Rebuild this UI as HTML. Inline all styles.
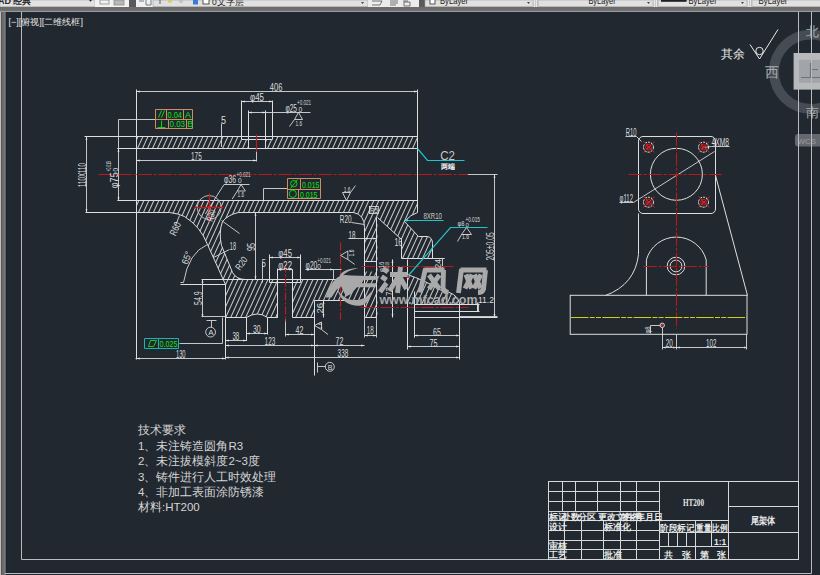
<!DOCTYPE html>
<html><head><meta charset="utf-8">
<style>
html,body{margin:0;padding:0;background:#212830;width:820px;height:575px;overflow:hidden}
svg{position:absolute;left:0;top:0;display:block}
text{font-family:"Liberation Sans",sans-serif}
</style></head><body>
<svg width="820" height="575" viewBox="0 0 820 575">
<defs>
<pattern id="hat" width="5" height="11" patternUnits="userSpaceOnUse">
<path d="M0,11 L5,0 M-5,11 L0,0 M5,11 L10,0" stroke="#c8c8c8" stroke-width="1.05"/>
</pattern>
<linearGradient id="tb" x1="0" y1="0" x2="0" y2="1">
<stop offset="0" stop-color="#e6e6e6"/><stop offset="1" stop-color="#d2d2d2"/>
</linearGradient>
</defs>
<!-- background -->
<rect x="0" y="0" width="820" height="575" fill="#212830"/>

<!-- TOOLBAR -->
<g id="toolbar">
<rect x="0" y="0" width="820" height="7" fill="url(#tb)"/>
<rect x="0" y="7" width="820" height="3.5" fill="#6c6c6c"/>
<rect x="0" y="10.5" width="820" height="1.5" fill="#9a9a9a"/>
<!-- dropdown 1 -->
<rect x="0" y="0" width="95" height="6.5" fill="#e2e2e2" stroke="#a8a8a8" stroke-width="0.6"/>
<text x="-2" y="4" font-size="9" fill="#2a2a2a" font-weight="bold">AD 经典</text>
<path d="M89,0 L92,0 L90.5,1.8 Z" fill="#303030"/>
<rect x="95" y="0" width="34" height="7" fill="#f2f2f2"/>
<rect x="100" y="0" width="9" height="4" fill="none" stroke="#8a8a8a" stroke-width="0.8"/>
<rect x="114" y="0" width="10" height="5" fill="#b8b8b8" stroke="#8a8a8a" stroke-width="0.8"/>
<rect x="129" y="0" width="7" height="7" fill="#5a5a5a"/>
<rect x="136" y="0" width="17" height="7" fill="#f0f0f0"/>
<path d="M139,1 H144 M146,0 V5 H151 V0" stroke="#506070" stroke-width="0.8" fill="none"/>
<!-- layer dropdown -->
<rect x="153" y="0" width="215" height="6.5" fill="#e0e0e0" stroke="#a0a0a0" stroke-width="0.6"/>
<path d="M160,0 V4" stroke="#606060" stroke-width="1"/>
<circle cx="170" cy="1" r="2" fill="#d8c870"/>
<circle cx="181" cy="1" r="2" fill="#c0c0c0"/>
<rect x="193" y="0" width="5" height="4.5" fill="#3c7ad8"/>
<rect x="203" y="-1" width="6" height="5" fill="#fff" stroke="#303030" stroke-width="0.8"/>
<text x="212" y="4.5" font-size="8.5" fill="#202020">0文字层</text>
<path d="M361,2 L364,2 L362.5,4 Z" fill="#404040"/>
<rect x="368" y="0" width="51" height="7" fill="#ececec"/>
<path d="M372,1 H382 L380,5 H372 M390,1 H398 M390,3 H398 M390,5 H396 M403,1 H408 M404,2 H410 V6 H404 Z" stroke="#404040" stroke-width="0.7" fill="none"/>
<rect x="419" y="0" width="6" height="7" fill="#5a5a5a"/>
<rect x="425" y="0" width="108" height="6.5" fill="#e0e0e0" stroke="#a0a0a0" stroke-width="0.6"/>
<rect x="430" y="-1" width="5" height="5" fill="#fff" stroke="#303030" stroke-width="0.8"/>
<text x="440" y="4" font-size="9" fill="#202020" textLength="28" lengthAdjust="spacingAndGlyphs">ByLayer</text>
<path d="M527,2 L530,2 L528.5,4 Z" fill="#404040"/>
<rect x="533" y="0" width="5" height="7" fill="#c8c8c8"/>
<path d="M534.5,0 V7 M536.5,0 V7" stroke="#f8f8f8" stroke-width="0.7"/>
<rect x="538" y="0" width="115" height="6.5" fill="#e0e0e0" stroke="#a0a0a0" stroke-width="0.6"/>
<text x="588.4" y="4" font-size="9" fill="#202020" textLength="27.3" lengthAdjust="spacingAndGlyphs">ByLayer</text>
<path d="M647,2 L650,2 L648.5,4 Z" fill="#404040"/>
<rect x="653" y="0" width="5" height="7" fill="#c8c8c8"/>
<path d="M654.5,0 V7 M656.5,0 V7" stroke="#f8f8f8" stroke-width="0.7"/>
<rect x="658" y="0" width="89" height="6.5" fill="#e0e0e0" stroke="#a0a0a0" stroke-width="0.6"/>
<rect x="661" y="0" width="25.6" height="1.8" fill="#202020"/>
<text x="688.5" y="4" font-size="9" fill="#202020" textLength="28.2" lengthAdjust="spacingAndGlyphs">ByLayer</text>
<path d="M741,2 L744,2 L742.5,4 Z" fill="#404040"/>
<rect x="747" y="0" width="5" height="7" fill="#c8c8c8"/>
<path d="M748.5,0 V7 M750.5,0 V7" stroke="#f8f8f8" stroke-width="0.7"/>
<rect x="752" y="0" width="70" height="6.5" fill="#e0e0e0" stroke="#a0a0a0" stroke-width="0.6"/>
<text x="758.5" y="4" font-size="9" fill="#202020" textLength="29" lengthAdjust="spacingAndGlyphs">ByLayer</text>
</g>
<!-- left panel -->
<rect x="0" y="12" width="5.7" height="563" fill="#6e6e6e"/>
<rect x="0" y="12" width="1.1" height="563" fill="#c0c0c0"/>
<rect x="1.1" y="12" width="1" height="563" fill="#555555"/>
<rect x="4.7" y="12" width="1" height="563" fill="#8e8e8e"/>
<rect x="5.7" y="12" width="0.8" height="563" fill="#1c222a"/>

<!-- FRAME -->
<g stroke="#b8bcc0" stroke-width="1" fill="none">
<path d="M21.5,12 V559.5 H798.5 V12"/>
<path d="M5,573.5 H811.5 V12"/>
</g>

<!-- viewport label -->
<text x="8.5" y="25" font-size="9" fill="#e4e4e4" textLength="74.5" lengthAdjust="spacingAndGlyphs">[−][俯视][二维线框]</text>

<!-- VIEWCUBE -->
<g id="viewcube">
<circle cx="811" cy="71.7" r="37.1" fill="none" stroke="#464c54" stroke-width="9.8"/>
<rect x="793.6" y="53" width="30" height="36.6" fill="#b8b9ba"/>
<rect x="799" y="59.8" width="25" height="23" fill="#a1a5a9"/>
<path d="M801,77.5 H820 M810.5,63 V77.5 M810.5,69.5 H818" stroke="#6e7378" stroke-width="1.2" fill="none"/>
<text x="805.5" y="35.5" font-size="13" fill="#a6aaae" style="font-family:'Liberation Serif',serif">北</text>
<text x="764.5" y="76.5" font-size="13.5" fill="#a6aaae" style="font-family:'Liberation Serif',serif">西</text>
<text x="805.5" y="117" font-size="13" fill="#a6aaae" style="font-family:'Liberation Serif',serif">南</text>
<rect x="795" y="134" width="30" height="12.5" rx="3" fill="#646970"/>
<text x="797.5" y="143.5" font-size="8" fill="#9a9ea3">WCS</text>
</g>
<!-- frame lines over viewcube -->
<g stroke="#b8bcc0" stroke-width="1" fill="none">
<path d="M798.5,12 V160 M811.5,12 V160"/>
</g>

<!-- 其余 roughness -->
<text x="720.5" y="57.5" font-size="11.5" fill="#e8e8e8" style="font-family:'Liberation Serif',serif">其余</text>
<g stroke="#e8e8e8" stroke-width="1" fill="none">
<path d="M750,44.5 L759.5,59 L778,29.5"/>
<circle cx="759.5" cy="51" r="3.7"/>
</g>

<!-- TECH TEXT -->
<g font-size="11.5" fill="#d4d4d4">
<text x="138" y="433.5">技术要求</text>
<text x="138" y="449.5">1、未注铸造圆角R3</text>
<text x="138" y="465">2、未注拔模斜度2~3度</text>
<text x="138" y="480.5">3、铸件进行人工时效处理</text>
<text x="138" y="496">4、非加工表面涂防锈漆</text>
<text x="138" y="511">材料:HT200</text>
</g>

<!-- TITLE BLOCK -->
<g stroke="#d8d8d8" stroke-width="1" fill="none">
<rect x="548.5" y="481.5" width="250" height="78"/>
<path d="M548.5,491.5 H659.5 M548.5,501.5 H659.5 M548.5,511.5 H659.5 M548.5,520.5 H659.5 M548.5,530.5 H659.5 M548.5,540.5 H659.5 M548.5,549.5 H659.5"/>
<path d="M562.5,481.5 V511.5 M575.5,481.5 V511.5 M597.5,481.5 V511.5 M620.5,481.5 V511.5 M636.5,481.5 V511.5"/>
<path d="M564.5,520.5 V559.5 M581.5,520.5 V559.5 M603.5,520.5 V559.5 M620.5,520.5 V559.5 M636.5,520.5 V559.5"/>
<path d="M659.5,481.5 V559.5 M728.5,481.5 V559.5"/>
<path d="M659.5,520.5 H728.5 M659.5,532.5 H728.5 M659.5,546.5 H728.5"/>
<path d="M668.5,532.5 V546.5 M677.5,532.5 V546.5 M686.5,532.5 V546.5 M695.5,520.5 V559.5 M711.5,520.5 V546.5"/>
<path d="M728.5,506.5 H798.5 M728.5,532.5 H798.5"/>
</g>
<g font-size="8.5" fill="#e8e8e8" font-weight="bold">
<text x="549" y="519.5">标记</text><text x="562" y="519.5">处数</text>
<text x="578" y="519.5">分区</text>
<text x="598" y="519.5">更改文件号</text>
<text x="621" y="519.5">签名</text>
<text x="636" y="519.5">年月日</text>
<text x="549" y="529.5">设计</text>
<text x="604" y="529.5">标准化</text>
<text x="549" y="548.5">审核</text>
<text x="549" y="558">工艺</text>
<text x="604" y="558">批准</text>
<text x="660" y="531" textLength="34.5" lengthAdjust="spacingAndGlyphs">阶段标记</text>
<text x="696" y="531" textLength="15" lengthAdjust="spacingAndGlyphs">重量</text>
<text x="712" y="531" textLength="15.5" lengthAdjust="spacingAndGlyphs">比例</text>
<text x="714" y="545">1:1</text>
<text x="664" y="557.5">共</text><text x="682" y="557.5">张</text>
<text x="700" y="557.5">第</text><text x="717" y="557.5">张</text>
<text x="683" y="506" font-size="11" textLength="21" lengthAdjust="spacingAndGlyphs" style="font-family:'Liberation Serif',serif">HT200</text>
<text x="750.5" y="524" font-size="10" textLength="24.5" lengthAdjust="spacingAndGlyphs">尾架体</text>
</g>

<!-- ===== MAIN VIEW: hatch ===== -->
<g fill="url(#hat)" stroke="none">
<!-- tube top wall -->
<path d="M136.5,136.5 H241.5 V139.5 H248.5 V148.5 H136.5 Z"/>
<path d="M265.5,148.5 V139.5 H272.5 V136.5 H417.5 V148.5 Z"/>
<!-- tube bottom wall + rib + left wall + right leg -->
<path d="M136.5,200.5 H417.5 V212.5 Q410.5,214.5 404.5,221.5 L418.5,236.5 H427.5 Q432.5,237.5 432.5,243.5 V258.5 H401.5 V239.5 L377.5,217.5 V317.5 H364.5 V227.5 Q364.5,214.5 353.5,212.5 H238.5 Q228.5,214.5 222.5,221.5 Q218.5,232.5 221.5,245.5 L232.5,272.5 Q236.5,279.5 245.5,279.5 H277.5 V317.5 H267.5 Q257.5,310.5 246.5,317.5 H225.5 V284.5 L207.5,244.5 Q200.5,226.5 184.5,216.5 Q178.5,213.5 169.5,212.5 H136.5 Z"/>
<!-- base middle -->
<path d="M292.5,279.5 H364.5 V300.5 H314.5 V317.5 H292.5 Z"/>
<!-- lower right block -->
<path d="M407.5,274.5 Q412.5,276.5 415.5,277.5 Q432.5,284.5 441.5,290.5 Q456.5,292.5 459.5,302.5 V304.5 H407.5 Z"/>
</g>

<rect x="365" y="261.5" width="11.5" height="10" fill="#212830"/>
<!-- ===== MAIN VIEW: outlines ===== -->
<g stroke="#dedede" stroke-width="1" fill="none">
<!-- tube -->
<path d="M84.5,136.5 H417.5"/>
<path d="M241.5,139.5 H272.5"/>
<path d="M117.5,148.5 H417.5"/>
<path d="M117.5,200.5 H417.5"/>
<path d="M136.5,89.5 V359.5"/>
<path d="M417.5,89.5 V212.5"/>
<path d="M241.5,100.5 V139.5 M272.5,100.5 V139.5 M248.5,110.5 V148.5 M265.5,110.5 V148.5"/>
<path d="M85.5,212.5 H169.5 Q178.5,213.5 184.5,216.5 Q200.5,226.5 207.5,244.5 L225.5,284.5 V359.5"/>
<path d="M238.5,212.5 Q228.5,214.5 222.5,221.5 Q218.5,232.5 221.5,245.5 L232.5,272.5 Q236.5,279.5 245.5,279.5"/>
<path d="M238.5,212.5 H353.5 Q364.5,214.5 364.5,227.5 V317.5 H376.5 V217.5"/>
<circle cx="209.2" cy="207.5" r="12" stroke="#b8b8b8"/>
<path d="M377.5,217.5 L401.5,239.5 V258.5 H432.5 V243.5 Q432.5,237.5 427.5,236.5 H418.5 L404.5,221.5 Q410.5,214.5 417.5,212.5"/>
<!-- base -->
<path d="M201.5,279.5 H364.5 M180.5,284.5 H225.5"/>
<path d="M225.5,317.5 H246.5 Q257.5,310.5 267.5,317.5 H277.5 V268.5 M246.5,317.5 V341 M267.5,317.5 V334.5"/>
<path d="M269.5,254.5 V282.5 H300.5 V254.5 M277.5,269.5 V317.5 M292.5,269.5 V317.5 H314.5 V300.5 H364.5"/>
<path d="M314.5,300.5 V375.5"/>
<!-- lower right -->
<path d="M407.5,259.5 V349.5 M407.5,274.5 Q412.5,276.5 415.5,277.5 Q432.5,284.5 441.5,290.5 Q456.5,292.5 459.5,302.5 V359.5 M414.5,291.5 V337.5"/>
<path d="M414.5,304.5 H479.5 M414.5,311.5 H479.5 M414.5,317.5 H497.5 M477.5,302.5 V311.5"/>
<path d="M392.5,259.5 V317.5 M432.5,258.5 H444.5 M364.5,261.5 H376.5"/>
</g>

<!-- ===== MAIN VIEW: dimension lines ===== -->
<g stroke="#d8d8d8" stroke-width="0.9" fill="none">
<path d="M136.5,91.5 H417.5 M241.5,101.5 H272.5 M248.5,112.5 H310.5"/>
<path d="M221.5,123.5 V147 M136.5,160.5 H256.5 M256.5,151.5 V161.5"/>
<path d="M86.5,136.5 V212.5 M118.5,119.5 V200.5 H117.5 M118.5,119.5 H155.5 M117.5,148.5 H119.5"/>
<path d="M467.5,174.5 H497.5 M494.5,174.5 V316.5 M459.5,316.5 H497.5"/>
<!-- Φ36 leader & roughness -->
<path d="M205.3,214 L224,184.5 H249.5"/>
<path d="M241,184.5 L237.3,191 H245.4 Z M237.3,191 L232.2,199"/>
<!-- Φ25 roughness -->
<path d="M298.5,112.5 L294.5,119.5 H302.5 Z M294.5,119.5 L289.5,126.5"/>
<!-- R60 leader -->
<path d="M179.5,215.5 L175.5,225.5"/>
<!-- R30 leader -->
<path d="M221.5,220.5 L239.5,233.5"/>
<!-- 65° arc -->
<path d="M207.5,244.5 Q188.5,252.5 183.5,282.5 M180.5,282.5 H183.5"/>
<!-- 18 rib leader -->
<path d="M213.5,257.5 L229.5,249.5"/>
<!-- 95 -->
<path d="M255.5,212.5 V279.5"/>
<!-- tol frame 2 leader -->
<path d="M263.5,200.5 V188.5 H287.5"/>
<!-- roughness near 345,195 -->
<path d="M342.5,192.5 H350.5 L346.5,200.5 Z M350.5,192.5 L355.5,185.5"/>
<path d="M466.5,227.5 L461.5,234.5 H471.5 Z M461.5,234.5 L457.5,241.5"/>
<rect x="369.5" y="206.5" width="8.8" height="7"/>
<!-- lower Φ45 / Φ22 / 5 / Φ20 -->
<path d="M269.5,257.5 H300.5 M277.5,269.5 H292.5 M262.5,262.5 V282.5 M305.5,269.5 H341.5 M333.5,269.5 V279.5"/>
<!-- rotated roughness (pointing left) -->
<path d="M340.5,255.5 L347.8,251 V259.5 Z M347.8,259.5 L354.6,264.3"/>
<!-- left wall 18 dim + R20 leader -->
<path d="M348.5,238.5 H376.5 M351.5,222.5 L364.5,224.5"/>
<!-- 73 / 24 -->
<path d="M442.5,258.5 V268.5 M478.5,303.5 V311.5 M432.5,258.5 H444.5"/>
<!-- 54.9 -->
<path d="M202.5,279.5 V316.5 M201.5,316.5 H225.5"/>
<!-- datum A -->
<path d="M206.5,320.5 H216.5 M211.5,320.5 V327.5"/>
<circle cx="210.6" cy="332.1" r="4.9"/>
<!-- flatness leader -->
<path d="M179.5,343.5 H222.5 V317.5"/>
<!-- bottom dims -->
<path d="M135.5,358.5 H225.5 M225.5,340.5 H246.5 M246.5,333.5 H267.5 M225.5,345.5 H314.5 M285.5,319.5 V336.5 M285.5,334.5 H314.5 M314.5,345.5 H364.5 M225.5,357.5 H458.5"/>
<path d="M364.5,317.5 V337.5 M376.5,317.5 V337.5 M364.5,335.5 H376.5 M323.5,300.5 V317.5"/>
<path d="M414.5,335.5 H458.5 M407.5,346.5 H458.5 M414.5,317.5 V337.5"/>
<!-- roughness near 72 -->
<path d="M314.5,325.5 L321.5,322 V329.5 Z M321.5,329.5 L328,334.5"/>
<!-- datum B -->
<path d="M317.5,362.5 V372.5 M317.5,366.5 H325.5"/>
<circle cx="329.8" cy="366.8" r="4.5"/>
</g>

<!-- arrowheads -->
<path fill="#e8e8e8" stroke="none" d="M136.5,91.5 L139.7,90.55 L139.7,92.45 Z M417.5,91.5 L414.3,90.55 L414.3,92.45 Z M241.5,101.5 L244.7,100.55 L244.7,102.45 Z M272.5,101.5 L269.3,100.55 L269.3,102.45 Z M248.5,112.5 L251.7,111.55 L251.7,113.45 Z M265.5,112.5 L262.3,111.55 L262.3,113.45 Z M136.5,160.5 L139.7,159.55 L139.7,161.45 Z M256.5,160.5 L253.3,159.55 L253.3,161.45 Z M269.5,257.5 L272.7,256.55 L272.7,258.45 Z M300.5,257.5 L297.3,256.55 L297.3,258.45 Z M277.5,269.5 L280.7,268.55 L280.7,270.45 Z M292.5,269.5 L289.3,268.55 L289.3,270.45 Z M305.5,269.5 L308.7,268.55 L308.7,270.45 Z M333.5,269.5 L330.3,268.55 L330.3,270.45 Z M364.5,238.5 L367.7,237.55 L367.7,239.45 Z M376.5,238.5 L373.3,237.55 L373.3,239.45 Z M136.5,358.5 L139.7,357.55 L139.7,359.45 Z M225.5,358.5 L222.3,357.55 L222.3,359.45 Z M225.5,340.5 L228.7,339.55 L228.7,341.45 Z M246.5,340.5 L243.3,339.55 L243.3,341.45 Z M246.5,333.5 L249.7,332.55 L249.7,334.45 Z M267.5,333.5 L264.3,332.55 L264.3,334.45 Z M225.5,345.5 L228.7,344.55 L228.7,346.45 Z M314.5,345.5 L311.3,344.55 L311.3,346.45 Z M285.5,334.5 L288.7,333.55 L288.7,335.45 Z M314.5,334.5 L311.3,333.55 L311.3,335.45 Z M314.5,345.5 L317.7,344.55 L317.7,346.45 Z M364.5,345.5 L361.3,344.55 L361.3,346.45 Z M225.5,357.5 L228.7,356.55 L228.7,358.45 Z M459.5,357.5 L456.3,356.55 L456.3,358.45 Z M364.5,335.5 L367.7,334.55 L367.7,336.45 Z M376.5,335.5 L373.3,334.55 L373.3,336.45 Z M414.5,335.5 L417.7,334.55 L417.7,336.45 Z M459.5,335.5 L456.3,334.55 L456.3,336.45 Z M407.5,346.5 L410.7,345.55 L410.7,347.45 Z M459.5,346.5 L456.3,345.55 L456.3,347.45 Z M662.5,347.5 L665.7,346.55 L665.7,348.45 Z M676.5,347.5 L673.3,346.55 L673.3,348.45 Z M676.5,347.5 L679.7,346.55 L679.7,348.45 Z M747.5,347.5 L744.3,346.55 L744.3,348.45 Z M86.5,136.5 L85.55,139.7 L87.45,139.7 Z M86.5,212.5 L85.55,209.3 L87.45,209.3 Z M118.5,148.5 L117.55,151.7 L119.45,151.7 Z M118.5,200.5 L117.55,197.3 L119.45,197.3 Z M255.5,212.5 L254.55,215.7 L256.45,215.7 Z M255.5,279.5 L254.55,276.3 L256.45,276.3 Z M202.5,279.5 L201.55,282.7 L203.45,282.7 Z M202.5,317.5 L201.55,314.3 L203.45,314.3 Z M323.5,300.5 L322.55,303.7 L324.45,303.7 Z M323.5,317.5 L322.55,314.3 L324.45,314.3 Z M494.5,174.5 L493.55,177.7 L495.45,177.7 Z M494.5,317.5 L493.55,314.3 L495.45,314.3 Z M392.5,259.5 L391.55,262.7 L393.45,262.7 Z M392.5,317.5 L391.55,314.3 L393.45,314.3 Z"/>
<!-- ===== centre lines (red) ===== -->
<g stroke="#b81a1a" stroke-width="1.1" fill="none" stroke-dasharray="13.4,1.8,3,1.8">
<path d="M98.5,174.5 H467.5"/>
<path d="M361.5,266.5 H453.5"/>
<path d="M360.5,307.5 H468.5"/>
</g>
<g stroke="#c01c1c" stroke-width="1.2" fill="none">
<path d="M256.5,134.5 V151.5"/>
<path d="M209.5,193.5 V221.5 M194.5,207.5 H223.5" stroke-width="1.3"/>
<path d="M285.5,264.5 V321.5" stroke-dasharray="8,2,2,2"/>
<path d="M340.5,242.5 V319.5" stroke-dasharray="8,2,2,2"/>
</g>
<circle cx="209.2" cy="207.3" r="1.3" fill="#e02020"/>

<!-- ===== MAIN VIEW: text ===== -->
<g fill="#dcdcdc" font-size="10.5">
<text x="269.8" y="91.4" textLength="12.6" lengthAdjust="spacingAndGlyphs">406</text>
<text x="250" y="101" textLength="14" lengthAdjust="spacingAndGlyphs">φ45</text>
<text x="285.4" y="111.8" textLength="11.6" lengthAdjust="spacingAndGlyphs">φ25</text>
<text x="297" y="105" font-size="6.8" textLength="14" lengthAdjust="spacingAndGlyphs">+0.021</text>
<text x="298.5" y="111.5" font-size="6.8">0</text>
<text x="295.5" y="125.5" font-size="6.6" textLength="6.5" lengthAdjust="spacingAndGlyphs">1.6</text>
<text x="221" y="123.8" textLength="5" lengthAdjust="spacingAndGlyphs">5</text>
<text x="191" y="160" textLength="10.7" lengthAdjust="spacingAndGlyphs">175</text>
<text transform="translate(85.8,187) rotate(-90)" font-size="10" textLength="24" lengthAdjust="spacingAndGlyphs">110X110</text>
<text transform="translate(117.9,188.3) rotate(-90)" font-size="10.5" textLength="16" lengthAdjust="spacingAndGlyphs">φ75</text>
<text transform="translate(110.6,171.5) rotate(-90)" font-size="6.6" textLength="10.5" lengthAdjust="spacingAndGlyphs">+0.019</text>
<text transform="translate(117.6,171.5) rotate(-90)" font-size="6.6">0</text>
<text x="440.2" y="160" font-size="12" textLength="14.7" lengthAdjust="spacingAndGlyphs" fill="#c8c8c8">C2</text>
<text x="441" y="169" font-size="7.2" fill="#f0f0f0" font-weight="bold">两端</text>
<text x="224.1" y="183.2" textLength="12.1" lengthAdjust="spacingAndGlyphs">φ36</text>
<text x="236.6" y="177.3" font-size="6.8" textLength="13.9" lengthAdjust="spacingAndGlyphs">+0.021</text>
<text x="238" y="183.3" font-size="6.6">0</text>
<text x="237.6" y="197" font-size="6.6" textLength="6.5" lengthAdjust="spacingAndGlyphs">1.6</text>
<text transform="translate(175.5,236.5) rotate(-65)" font-size="10" textLength="14" lengthAdjust="spacingAndGlyphs">R60</text>
<text transform="translate(212.5,222) rotate(-75)" font-size="9" textLength="12" lengthAdjust="spacingAndGlyphs">R30</text>
<text transform="translate(187.5,265) rotate(-70)" font-size="9.5" textLength="13" lengthAdjust="spacingAndGlyphs">65°</text>
<text x="229.8" y="250" textLength="6.2" lengthAdjust="spacingAndGlyphs">18</text>
<text transform="translate(240,271) rotate(-55)" font-size="9.5" textLength="14" lengthAdjust="spacingAndGlyphs">R20</text>
<text transform="translate(255,251) rotate(-90)" font-size="10" textLength="8" lengthAdjust="spacingAndGlyphs">95</text>
<text x="343.7" y="192.4" font-size="6.6" textLength="6.8" lengthAdjust="spacingAndGlyphs">1.6</text>
<text x="278.3" y="256.6" textLength="13.7" lengthAdjust="spacingAndGlyphs">φ45</text>
<text x="278.3" y="268.6" textLength="13.7" lengthAdjust="spacingAndGlyphs">φ22</text>
<text x="261.7" y="266.7" textLength="4" lengthAdjust="spacingAndGlyphs">5</text>
<text x="305.6" y="268.5" textLength="11.7" lengthAdjust="spacingAndGlyphs">φ20</text>
<text x="317.3" y="263" font-size="6.6" textLength="13.7" lengthAdjust="spacingAndGlyphs">+0.021</text>
<text x="317.3" y="268.5" font-size="6.6">0</text>
<text transform="translate(354,256.5) rotate(-90)" font-size="6.6" textLength="7" lengthAdjust="spacingAndGlyphs">1.6</text>
<text x="339.8" y="222.5" font-size="10" textLength="11.7" lengthAdjust="spacingAndGlyphs">R20</text>
<text x="348.5" y="239" font-size="10" textLength="6.9" lengthAdjust="spacingAndGlyphs">18</text>
<text x="370" y="212.5" font-size="8" textLength="7.8" lengthAdjust="spacingAndGlyphs">R5</text>
<text x="394.4" y="246" font-size="10" textLength="7.8" lengthAdjust="spacingAndGlyphs">16</text>
<text x="423.4" y="218.6" font-size="8.3" textLength="18.6" lengthAdjust="spacingAndGlyphs" fill="#c8c8c8">8XR10</text>
<text x="457.6" y="225.5" font-size="8" textLength="6.8" lengthAdjust="spacingAndGlyphs">φ8</text>
<text x="465.4" y="221.6" font-size="6.6" textLength="14.6" lengthAdjust="spacingAndGlyphs">+0.015</text>
<text x="465.6" y="226.5" font-size="6">0</text>
<text x="462" y="238.5" font-size="6.6" textLength="7" lengthAdjust="spacingAndGlyphs">1.6</text>
<text transform="translate(494.4,260.6) rotate(-90)" font-size="10" textLength="28.3" lengthAdjust="spacingAndGlyphs">205±0.05</text>
<text transform="translate(441.2,268.5) rotate(-90)" font-size="9" textLength="9.5" lengthAdjust="spacingAndGlyphs">24</text>
<text transform="translate(383.5,272) rotate(-90)" font-size="6.5" textLength="10.4" lengthAdjust="spacingAndGlyphs">φ16</text>
<text transform="translate(388.5,272) rotate(-90)" font-size="5.5" textLength="10" lengthAdjust="spacingAndGlyphs">+0.018</text>
<text transform="translate(391.5,296) rotate(-90)" font-size="9.5" textLength="9" lengthAdjust="spacingAndGlyphs">73</text>
<text x="478" y="302.6" font-size="9" textLength="16" lengthAdjust="spacingAndGlyphs">11.2</text>
<text transform="translate(202.2,305) rotate(-90)" font-size="10" textLength="13.7" lengthAdjust="spacingAndGlyphs">54.9</text>
<text x="208.3" y="335.2" font-size="8">A</text>
<text x="175.9" y="358" textLength="9.7" lengthAdjust="spacingAndGlyphs">130</text>
<text x="232.4" y="340" textLength="6.9" lengthAdjust="spacingAndGlyphs">38</text>
<text x="253" y="333.3" textLength="7.7" lengthAdjust="spacingAndGlyphs">30</text>
<text x="264.6" y="345" textLength="10.8" lengthAdjust="spacingAndGlyphs">123</text>
<text x="295.6" y="334" textLength="7.8" lengthAdjust="spacingAndGlyphs">42</text>
<text x="335.6" y="344.8" textLength="7.8" lengthAdjust="spacingAndGlyphs">72</text>
<text x="337.6" y="357.2" textLength="10.7" lengthAdjust="spacingAndGlyphs">338</text>
<text x="366.8" y="334" textLength="6.9" lengthAdjust="spacingAndGlyphs">18</text>
<text transform="translate(323,313.5) rotate(-90)" font-size="9" textLength="10.7" lengthAdjust="spacingAndGlyphs">26</text>
<text x="433" y="335.5" textLength="7.8" lengthAdjust="spacingAndGlyphs">65</text>
<text x="429.5" y="346.8" textLength="8" lengthAdjust="spacingAndGlyphs">75</text>
<text transform="translate(321.8,329) rotate(-90)" font-size="6" textLength="6.5" lengthAdjust="spacingAndGlyphs">1.6</text>
<text x="327.7" y="369.5" font-size="7.2">B</text>
</g>

<!-- ===== tolerance frames ===== -->
<g fill="none" stroke="#c89060" stroke-width="1">
<path d="M155.5,109.5 H192.5 V128.5 H155.5 Z M155.5,119.5 H192.5 M166.5,109.5 V119.5 M183.5,109.5 V119.5 M168.5,119.5 V128.5 M186.5,119.5 V128.5"/>
<path d="M287.5,178.5 H320.5 V198.5 H287.5 Z M287.5,189.5 H320.5 M300.5,178.5 V189.5 M298.5,189.5 V198.5"/>
</g>
<g fill="none" stroke="#20b0b8" stroke-width="1">
<path d="M144.5,338.5 H178.5 V348.5 H144.5 Z M158.5,338.5 V348.5"/>
</g>
<g fill="#10e010" font-size="9">
<text x="167.5" y="117.5" textLength="14.5" lengthAdjust="spacingAndGlyphs">0.04</text>
<text x="185" y="117.5">A</text>
<text x="169.5" y="127" textLength="15.5" lengthAdjust="spacingAndGlyphs">0.03</text>
<text x="187.2" y="127">B</text>
<text x="302" y="187.5" textLength="17.5" lengthAdjust="spacingAndGlyphs">0.015</text>
<text x="300" y="197.5" textLength="17.5" lengthAdjust="spacingAndGlyphs">0.015</text>
<text x="159.5" y="347.3" textLength="18" lengthAdjust="spacingAndGlyphs">0.025</text>
</g>
<g fill="none" stroke="#10e010" stroke-width="0.9">
<path d="M158.5,117.5 L161.5,110.5 M161.5,117.5 L164.5,110.5"/>
<path d="M161.5,120.5 V127.5 M157.5,127.5 H165.5"/>
<path d="M148.5,346.5 L150.5,340.5 H156.5 L153.5,346.5 Z"/>
<circle cx="293.8" cy="183.7" r="3.2"/><path d="M290.5,188.5 L297.5,179.5"/>
<circle cx="292.8" cy="193.9" r="3.6"/>
</g>

<!-- ===== cyan leaders ===== -->
<g fill="none" stroke="#1ec4cc" stroke-width="1.2">
<path d="M417.5,148.5 L427.5,160.5 H464.5"/>
<path d="M406.5,220.5 H443.5"/>
<path d="M487.5,227.5 H450.5 L407.5,276.5"/>
</g>
<circle cx="406.8" cy="220.2" r="1.3" fill="#20e0e8"/>
<circle cx="407.9" cy="276.6" r="1.5" fill="#e02020"/>

<!-- ===== SIDE VIEW ===== -->
<g stroke="#dedede" stroke-width="1" fill="none">
<rect x="638.5" y="136.5" width="77" height="77" rx="4.5"/>
<circle cx="676.4" cy="174.3" r="26"/>
<path d="M638.5,213.5 V254.5 Q635,284.5 605.5,295.5"/>
<path d="M715.5,175.5 L747.5,295.5"/>
<rect x="570.2" y="295.3" width="176.8" height="39"/>
<path d="M646.4,295.3 V259.9 A31,31 0 0 1 706.2,259.9 V295.3"/>
<circle cx="676" cy="266" r="8.8"/>
<circle cx="676" cy="266" r="5.9"/>
</g>
<g stroke="#d8d8d8" stroke-width="0.9" fill="none">
<path d="M625.5,136.5 H636.5 L641.5,141.5"/>
<path d="M703.5,147.5 L711.5,146.5 H729.5"/>
<path d="M619.5,202.5 H633.5 L714.5,151.5"/>
<path d="M662.5,327.5 V349.5 M676.5,334.5 V349.5 M662.5,347.5 H746.5 M746.5,334.5 V349.5"/>
<path d="M650.5,325.5 H660.5 M650.5,325.5 V333.5"/>
</g>
<g stroke="#f0f0f0" stroke-width="1" fill="none" stroke-dasharray="2.2,1">
<circle cx="648.5" cy="147.2" r="5"/>
<circle cx="703.5" cy="147.2" r="5"/>
<circle cx="648.5" cy="202.2" r="5"/>
<circle cx="703.5" cy="202.2" r="5"/>
</g>
<g stroke="#d81c1c" stroke-width="1" fill="none">
<circle cx="648.5" cy="147.2" r="2.8"/>
<circle cx="703.5" cy="147.2" r="2.8"/>
<circle cx="648.5" cy="202.2" r="2.8"/>
<circle cx="703.5" cy="202.2" r="2.8"/>
<path d="M643.5,152.5 L654.5,141.5 M643.5,141.5 L654.5,152.5 M698.5,152.5 L709.5,141.5 M698.5,141.5 L709.5,152.5 M643.5,207.5 L654.5,196.5 M643.5,196.5 L654.5,207.5 M698.5,207.5 L709.5,196.5 M698.5,196.5 L709.5,207.5"/>
<circle cx="662.2" cy="325.3" r="2.2" stroke="#e0e0e0"/>
</g>
<g fill="#e02020">
<circle cx="648.5" cy="147.2" r="1.3"/><circle cx="703.5" cy="147.2" r="1.3"/>
<circle cx="648.5" cy="202.2" r="1.3"/><circle cx="703.5" cy="202.2" r="1.3"/>
<circle cx="662.2" cy="325.3" r="1.3"/>
</g>
<g stroke="#b81a1a" stroke-width="1.1" fill="none" stroke-dasharray="13.4,1.8,3,1.8">
<path d="M676.5,132.5 V328.5"/>
<path d="M628.5,174.5 H723.5"/>
<path d="M643.5,266.5 H708.5"/>
</g>
<path d="M571,317.5 H747" stroke="#d0d018" stroke-width="1.2" stroke-dasharray="17.5,1.3,5,1.2,5,1.3"/>
<g fill="#dcdcdc" font-size="10">
<text x="625.7" y="135.5" textLength="10.8" lengthAdjust="spacingAndGlyphs">R10</text>
<text x="711.6" y="146.2" textLength="17.4" lengthAdjust="spacingAndGlyphs">4XM8</text>
<text x="619.6" y="201.8" textLength="13.4" lengthAdjust="spacingAndGlyphs">φ112</text>
<text x="665.7" y="346.8" textLength="7.1" lengthAdjust="spacingAndGlyphs">20</text>
<text x="706" y="346.8" textLength="10.4" lengthAdjust="spacingAndGlyphs">102</text>
<text transform="translate(650.2,333.5) rotate(-90)" font-size="8" textLength="7.1" lengthAdjust="spacingAndGlyphs">φ8</text>
</g>

<!-- ===== WATERMARK ===== -->
<g fill="#a9a9a9" stroke="none">
<!-- MF logo -->
<path d="M325.8,297.5 C328,289 333,279 340,276 C343,274.5 347,275 351,275.6 L379.3,276.3 L377.5,279.8 L363,280.2 L351,294 L346,296.5 L341,286.2 L336.3,290 L331.5,297.5 Z"/>
<path d="M352,283.3 L376.8,283.3 L375.3,287.2 L350,287.2 Z"/>
<path d="M337.5,289.5 C340,301 350,306.5 360,305.8 C367,305 370.5,298 371.7,290.4 C368,297 362,300.5 353,300 C346,299.5 341,295 337.5,289.5 Z"/>
<path d="M339.6,275.4 C343,270.5 350,268 358.4,268.3 C351,269.5 345.5,272.5 341.5,277 Z"/>
</g>
<g stroke="#a9a9a9" stroke-width="4.9" fill="none" stroke-linecap="butt">
<!-- 沐 -->
<path d="M383,268.5 L388,272 M381.5,276.5 L386.5,280 M380,292 L386.5,283"/>
<path d="M390,274.5 H407.5 M400.5,267 L397.5,293 M398.5,276 L389.5,291 M400,277 L406.5,289"/>
<!-- 风 -->
<path d="M425.5,268.5 L420,292.5 M424.5,270 H444.5 M443.5,270 L443,288 Q444,292 448.5,292.5"/>
<path d="M429,275 L439.5,289 M439.5,275 L429,289"/>
<!-- 网 -->
<path d="M461.5,269 L458.5,293 M460.5,270 H486.5 M485.5,270 L483.5,289 Q482.5,292.5 478,292.5"/>
<path d="M466,274.5 L471.5,288.5 M472,274.5 L465,288.5 M474.5,274.5 L480.5,288.5 M481,274.5 L474,288.5"/>
</g>
<text x="379.4" y="303.6" font-size="12" font-weight="bold" fill="#a9a9a9" textLength="98.2" lengthAdjust="spacingAndGlyphs">www.mfcad.com</text>

</svg>
</body></html>
